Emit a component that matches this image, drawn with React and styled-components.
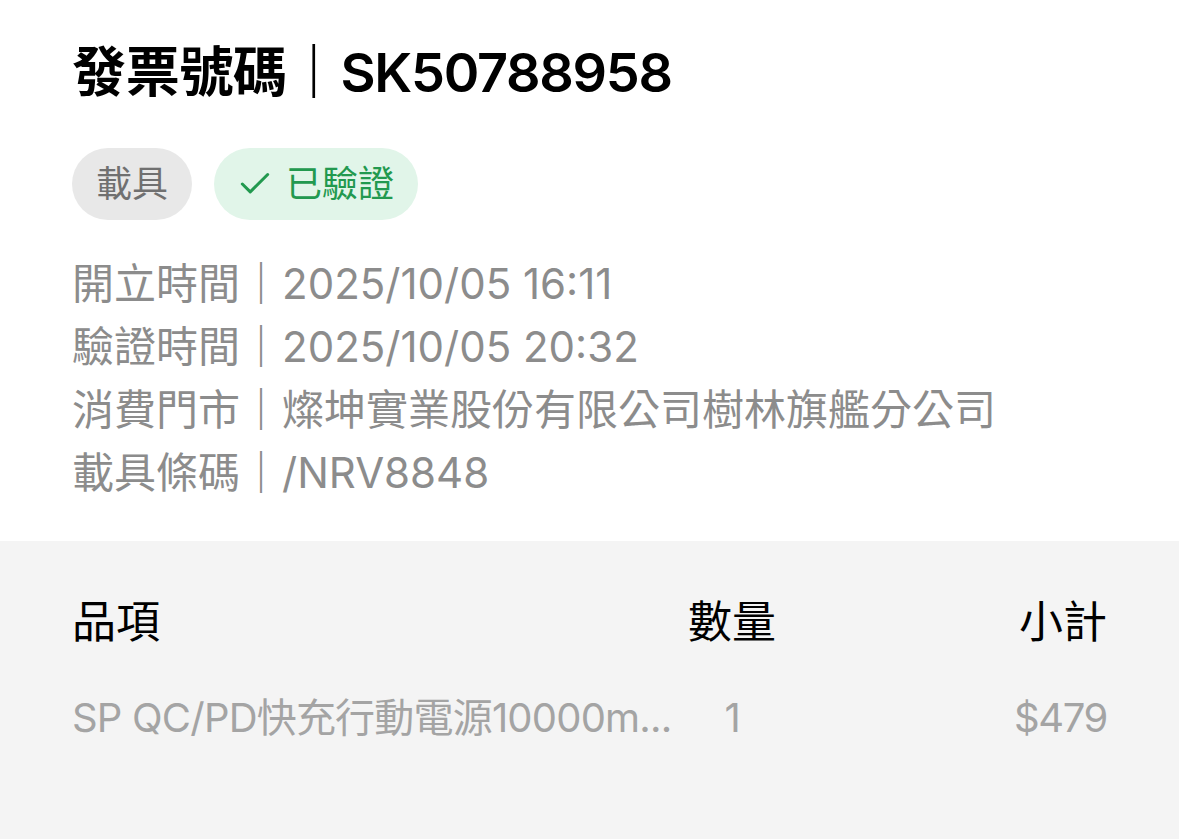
import React from "react";
import styled, { createGlobalStyle } from "styled-components";
import { Check } from "lucide-react";

const Global = createGlobalStyle`
  html, body { margin: 0; padding: 0; background: #ffffff; }
  body {
    font-family: Inter, "Noto Sans CJK TC", "Noto Sans", sans-serif;
    -webkit-font-smoothing: antialiased;
  }
`;

const Page = styled.div`
  width: 1179px;
  height: 839px;
  display: flex;
  flex-direction: column;
  background: #ffffff;
  overflow: hidden;
`;

const Header = styled.section`
  padding: 38px 72px 37px;
  display: flex;
  flex-direction: column;
`;

const Title = styled.h1`
  margin: 0;
  font-size: 54px;
  line-height: 70px;
  font-weight: 600;
  color: #000000;
  letter-spacing: -0.3px;
`;

const Number = styled.span`
  letter-spacing: -1.3px;
`;

const Sep = styled.span`
  font-weight: ${(p) => p.$weight || 700};
`;

const Badges = styled.div`
  display: flex;
  gap: 22px;
  margin-top: 40px;
`;

const Badge = styled.span`
  display: inline-flex;
  align-items: center;
  gap: 12px;
  height: 72px;
  padding: 0 24px;
  border-radius: 36px;
  font-size: 36px;
  line-height: 1;
  background: ${(p) => (p.$tone === "green" ? "#e1f5e9" : "#e8e8e8")};
  color: ${(p) => (p.$tone === "green" ? "#22994f" : "#707070")};

  svg {
    margin-left: -2px;
  }
`;

const InfoList = styled.dl`
  margin: 32px 0 0;
  display: flex;
  flex-direction: column;
`;

const InfoRow = styled.div`
  display: flex;
  font-size: 42px;
  line-height: 63px;
  color: #8c8c8c;
  white-space: nowrap;
`;

const InfoLabel = styled.dt`
  margin: 0;
`;

const InfoValue = styled.dd`
  margin: 0;
`;

const Items = styled.section`
  flex: 1;
  background: #f4f4f4;
  padding: 50px 72px 0;
`;

const ItemGrid = styled.div`
  display: grid;
  grid-template-columns: minmax(0, 608px) 104px 1fr;
  align-items: center;
`;

const HeadCell = styled.div`
  font-size: 44px;
  line-height: 62px;
  color: #000000;
  text-align: ${(p) => p.$align || "left"};
`;

const Cell = styled.div`
  font-size: 40px;
  line-height: 62px;
  color: #a4a4a4;
  margin-top: 34px;
  text-align: ${(p) => p.$align || "left"};
  white-space: nowrap;
  overflow: hidden;
  text-overflow: ellipsis;
  letter-spacing: ${(p) => (p.$tight ? "-0.8px" : "-1.4px")};
`;

const info = [
  ["開立時間", "2025/10/05 16:11"],
  ["驗證時間", "2025/10/05 20:32"],
  ["消費門市", "燦坤實業股份有限公司樹林旗艦分公司"],
  ["載具條碼", "/NRV8848"],
];

export default function App() {
  return (
    <Page>
      <Global />
      <Header>
        <Title>
          發票號碼<Sep $weight={900}>｜</Sep>
          <Number>SK50788958</Number>
        </Title>
        <Badges>
          <Badge>載具</Badge>
          <Badge $tone="green">
            <Check size={38} strokeWidth={1.9} />
            已驗證
          </Badge>
        </Badges>
        <InfoList>
          {info.map(([k, v]) => (
            <InfoRow key={k}>
              <InfoLabel>{k}</InfoLabel>
              <InfoValue>
                <Sep>｜</Sep>
                {v}
              </InfoValue>
            </InfoRow>
          ))}
        </InfoList>
      </Header>
      <Items>
        <ItemGrid>
          <HeadCell>品項</HeadCell>
          <HeadCell $align="center">數量</HeadCell>
          <HeadCell $align="right">小計</HeadCell>
          <Cell $tight>SP QC/PD快充行動電源10000m...</Cell>
          <Cell $align="center">1</Cell>
          <Cell $align="right">$479</Cell>
        </ItemGrid>
      </Items>
    </Page>
  );
}
